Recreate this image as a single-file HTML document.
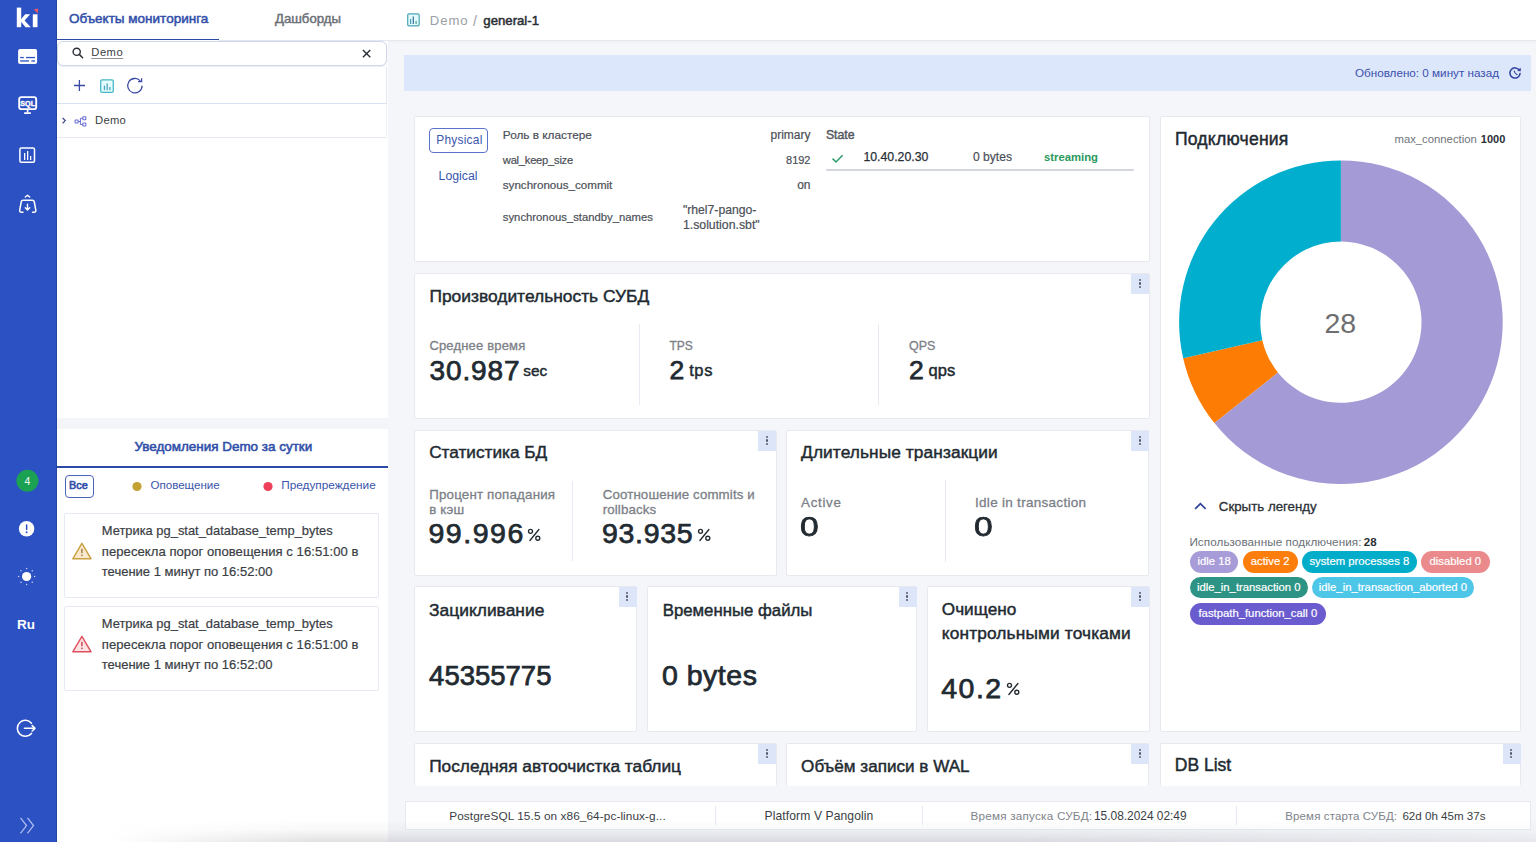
<!DOCTYPE html>
<html><head><meta charset="utf-8">
<style>
*{margin:0;padding:0;box-sizing:border-box}
html,body{width:1536px;height:842px;overflow:hidden;background:#f5f6fa;font-family:"Liberation Sans",sans-serif;color:#232a33}
.a{position:absolute}
.t,.tc{position:absolute;white-space:nowrap;line-height:1}
.card{position:absolute;background:#fff;border:1px solid #e7e9ef;border-radius:2px}
</style></head><body>
<div class="a" style="left:0px;top:0px;width:57px;height:842px;background:#2c51c3"></div>
<div class="a" style="left:56px;top:0px;width:1px;height:842px;background:#24459f"></div>
<svg class="a" style="left:0px;top:0px;" width="57" height="40" viewBox="0 0 57 40"><rect x="16.8" y="7.6" width="4.4" height="19.6" fill="#fff"/><polygon points="21,19.2 25.2,14.3 30.2,14.3 24.6,20.4 30.8,27.2 25.6,27.2 21,21.8" fill="#fff"/><rect x="32.8" y="14.3" width="4.7" height="12.9" fill="#fff"/><polygon points="33.8,9.6 38.2,8.6 37.8,13.4" fill="#e85a62"/></svg>
<svg class="a" style="left:0px;top:40px;" width="57" height="30" viewBox="0 0 57 30"><rect x="18.1" y="8.9" width="19" height="15.2" rx="2" fill="#fff"/><rect x="20.2" y="16.9" width="3.6" height="1.3" fill="#2c51c3"/><rect x="26" y="16.9" width="9" height="1.3" fill="#2c51c3"/><rect x="20.2" y="20.3" width="8.9" height="1.3" fill="#2c51c3"/><rect x="31.4" y="20.3" width="3.6" height="1.3" fill="#2c51c3"/></svg>
<svg class="a" style="left:0px;top:90px;" width="57" height="28" viewBox="0 0 57 28"><rect x="19.2" y="7.1" width="17" height="12" rx="2.2" fill="none" stroke="#fff" stroke-width="1.9"/><rect x="26.8" y="19.5" width="1.6" height="3" fill="#fff"/><rect x="24" y="22.3" width="7" height="1.6" rx=".6" fill="#fff"/><text x="27.7" y="16.3" text-anchor="middle" font-family="Liberation Sans" font-weight="700" font-size="7.2" fill="#fff" stroke="#fff" stroke-width=".35">SQL</text></svg>
<svg class="a" style="left:0px;top:140px;" width="57" height="28" viewBox="0 0 57 28"><rect x="19.9" y="7.9" width="14.6" height="14.3" rx="1.5" fill="none" stroke="#fff" stroke-width="1.5"/><rect x="24" y="13" width="1.3" height="7" fill="#fff"/><rect x="27" y="11" width="1.3" height="9" fill="#fff"/><rect x="30" y="16" width="1.3" height="4" fill="#fff"/></svg>
<svg class="a" style="left:0px;top:190px;" width="57" height="28" viewBox="0 0 57 28"><polyline points="25.3,7 27.5,5.3 29.7,7" fill="none" stroke="#fff" stroke-width="1.4" stroke-linecap="round" stroke-linejoin="round"/><path d="M23 22.3 H21.6 Q19.5 22.3 19.7 20.2 L21.2 12 Q21.5 10.3 23.2 10.3 H32.3 Q34 10.3 34.3 12 L35.8 20.2 Q36 22.3 33.9 22.3 H32.6" fill="none" stroke="#fff" stroke-width="1.5" stroke-linejoin="round" stroke-linecap="round"/><path d="M27.5 14.3 V20 M25.3 17.8 L27.5 20 L29.7 17.8" fill="none" stroke="#fff" stroke-width="1.4" stroke-linecap="round" stroke-linejoin="round"/></svg>
<svg class="a" style="left:0px;top:468px;" width="57" height="26" viewBox="0 0 57 26"><circle cx="27.4" cy="12.7" r="11" fill="#1aa152"/><text x="27.4" y="16.6" text-anchor="middle" font-family="Liberation Sans" font-size="10.5" fill="#fff">4</text></svg>
<svg class="a" style="left:0px;top:518px;" width="57" height="22" viewBox="0 0 57 22"><circle cx="26.6" cy="10.8" r="7.7" fill="#fff"/><rect x="25.9" y="6.3" width="1.5" height="5.8" rx=".7" fill="#2c51c3"/><circle cx="26.65" cy="14.2" r=".95" fill="#2c51c3"/></svg>
<svg class="a" style="left:0px;top:560px;" width="57" height="34" viewBox="0 0 57 34"><circle cx="26.6" cy="16.5" r="4.6" fill="#fff"/><circle cx="34.60" cy="16.50" r=".75" fill="#c8d3f5"/><circle cx="32.26" cy="22.16" r=".75" fill="#c8d3f5"/><circle cx="26.60" cy="24.50" r=".75" fill="#c8d3f5"/><circle cx="20.94" cy="22.16" r=".75" fill="#c8d3f5"/><circle cx="18.60" cy="16.50" r=".75" fill="#c8d3f5"/><circle cx="20.94" cy="10.84" r=".75" fill="#c8d3f5"/><circle cx="26.60" cy="8.50" r=".75" fill="#c8d3f5"/><circle cx="32.26" cy="10.84" r=".75" fill="#c8d3f5"/></svg>
<div class="t" style="left:17.00px;top:617.80px;font-size:13.5px;color:#fff;font-weight:700;">Ru</div>
<svg class="a" style="left:0px;top:712px;" width="57" height="32" viewBox="0 0 57 32"><path d="M31.5 11.2 A8 8 0 1 0 31.5 21.4" fill="none" stroke="#fff" stroke-width="1.6" stroke-linecap="round"/><path d="M24.5 16.3 H35 M32.2 13.6 L35 16.3 L32.2 19" fill="none" stroke="#fff" stroke-width="1.6" stroke-linecap="round" stroke-linejoin="round"/></svg>
<svg class="a" style="left:0px;top:810px;" width="57" height="30" viewBox="0 0 57 30"><polyline points="20.5,7.8 26.5,15.6 20.5,23.4" fill="none" stroke="#aebcf0" stroke-width="1.3"/><polyline points="27.5,7.8 33.5,15.6 27.5,23.4" fill="none" stroke="#aebcf0" stroke-width="1.3"/></svg>
<div class="a" style="left:57px;top:0px;width:331px;height:418px;background:#fff"></div>
<div class="a" style="left:57px;top:418px;width:331px;height:11px;background:#f4f5f8"></div>
<div class="a" style="left:57px;top:429px;width:331px;height:413px;background:#fff"></div>
<div class="t" style="left:68.90px;top:12.31px;font-size:13.5px;color:#2f4ea9;-webkit-text-stroke:0.5px #2f4ea9;">Объекты мониторинга</div>
<div class="t" style="left:275.00px;top:12.32px;font-size:13.2px;color:#6b6f76;-webkit-text-stroke:0.45px #6b6f76;">Дашборды</div>
<div class="a" style="left:57px;top:38.8px;width:162px;height:1.7px;background:#2b4aa6"></div>
<div class="a" style="left:219px;top:40px;width:169px;height:1px;background:#e3e8f4"></div>
<div class="a" style="left:57px;top:41px;width:330px;height:25px;background:#fff;border:1px solid #cfd6ea;border-radius:6px;box-shadow:0 1px 2px rgba(60,80,160,.12)"></div>
<svg class="a" style="left:66px;top:44px;" width="24" height="18" viewBox="0 0 24 18"><circle cx="10.7" cy="7.8" r="3.6" fill="none" stroke="#2a2f36" stroke-width="1.4"/><line x1="13.3" y1="10.4" x2="16.6" y2="13.7" stroke="#2a2f36" stroke-width="1.5" stroke-linecap="round"/></svg>
<div class="t" style="left:91.30px;top:47.00px;font-size:11.2px;color:#3a3e44;letter-spacing:0.5px;text-decoration:underline;text-decoration-color:#8a8d92;text-decoration-thickness:1.3px;text-underline-offset:2px;">Demo</div>
<svg class="a" style="left:358px;top:45px;" width="16" height="16" viewBox="0 0 16 16"><path d="M4.9 4.9 L12.3 12.3 M12.3 4.9 L4.9 12.3" stroke="#2a2f36" stroke-width="1.4"/></svg>
<div class="a" style="left:57px;top:67px;width:330px;height:37px;background:#fff;border-right:1px solid #e0e7f6;border-bottom:1px solid #d9e1f3;box-shadow:0 1px 1px rgba(60,80,160,.06)"></div>
<svg class="a" style="left:70px;top:76px;" width="20" height="20" viewBox="0 0 20 20"><path d="M9.4 4.1 V15 M4 9.5 H15" stroke="#3a48a6" stroke-width="1.3"/></svg>
<svg class="a" style="left:96px;top:75px;" width="22" height="22" viewBox="0 0 22 22"><rect x="4.7" y="4.8" width="12.6" height="12.6" rx="1.4" fill="#e6fbfd" stroke="#46b8c8" stroke-width="1.3"/><rect x="7.8" y="10.6" width="1.3" height="4.6" fill="#4aa6c0"/><rect x="10.5" y="8.4" width="1.3" height="6.8" fill="#4aa6c0"/><rect x="13.2" y="12" width="1.3" height="3.2" fill="#4aa6c0"/></svg>
<svg class="a" style="left:122px;top:73px;" width="26" height="26" viewBox="0 0 26 26"><path d="M18.3 7.9 A7.2 7.2 0 1 0 20.1 12.8" fill="none" stroke="#3a48a6" stroke-width="1.3"/><polyline points="19.6,5.3 19.6,8.6 16.1,8.6" fill="none" stroke="#3a48a6" stroke-width="1.3"/></svg>
<div class="a" style="left:57px;top:104px;width:330px;height:34px;background:#fff;border-right:1px solid #eef1f7;border-bottom:1px solid #e7eaf1"></div>
<svg class="a" style="left:58px;top:112px;" width="34" height="18" viewBox="0 0 34 18"><polyline points="4.6,5.8 7.2,8.6 4.6,11.4" fill="none" stroke="#33407f" stroke-width="1.2"/><rect x="17.1" y="8" width="3" height="3" rx=".5" fill="none" stroke="#6a6fd2" stroke-width="1.1"/><rect x="24.8" y="4.8" width="3" height="3" rx=".5" fill="none" stroke="#6a6fd2" stroke-width="1.1"/><rect x="24.8" y="11" width="3" height="3" rx=".5" fill="none" stroke="#6a6fd2" stroke-width="1.1"/><path d="M20.1 9.5 H22.4 M22.4 6.3 V12.5 M22.4 6.3 H24.8 M22.4 12.5 H24.8" fill="none" stroke="#6a6fd2" stroke-width="1"/></svg>
<div class="t" style="left:95.00px;top:115.00px;font-size:11.2px;color:#3a3e44;letter-spacing:0.3px;">Demo</div>
<div class="t" style="left:134.50px;top:440.31px;font-size:13.45px;color:#2f4ea9;-webkit-text-stroke:0.55px #2f4ea9;">Уведомления Demo за сутки</div>
<div class="a" style="left:57px;top:466px;width:331px;height:2px;background:#2b4aa6"></div>
<div class="a" style="left:64.5px;top:474.8px;width:29px;height:23px;background:#fff;border:1px solid #4a64b8;border-radius:4px"></div>
<div class="t" style="left:69.10px;top:480.42px;font-size:10.9px;color:#2f4ea9;-webkit-text-stroke:0.6px #2f4ea9;">Все</div>
<svg class="a" style="left:130px;top:480px;" width="14" height="14" viewBox="0 0 14 14"><circle cx="7" cy="6.5" r="4.6" fill="#c4a133"/></svg>
<div class="t" style="left:150.40px;top:479.40px;font-size:11.6px;color:#3a55ad;">Оповещение</div>
<svg class="a" style="left:261px;top:480px;" width="14" height="14" viewBox="0 0 14 14"><circle cx="7" cy="6.5" r="4.6" fill="#ee4058"/></svg>
<div class="t" style="left:281.20px;top:480.41px;font-size:11.8px;color:#3a55ad;">Предупреждение</div>
<div class="a" style="left:63.5px;top:512.9px;width:315px;height:85px;background:#fff;border:1px solid #e6eaf4;border-radius:2px"></div>
<svg class="a" style="left:66px;top:536px;" width="32" height="30" viewBox="0 0 32 30"><polygon points="15.9,7.3 6.8,22.8 25.1,22.8" fill="#fbe9cf" stroke="#c9a040" stroke-width="1.4" stroke-linejoin="round"/><rect x="15.2" y="12.8" width="1.4" height="4.4" fill="#9c7a3c"/><rect x="15.2" y="18.6" width="1.4" height="1.5" fill="#9c7a3c"/></svg>
<div class="t" style="left:101.80px;top:525.22px;font-size:12.9px;color:#3a3e44;-webkit-text-stroke:0.2px #3a3e44;">Метрика pg_stat_database_temp_bytes</div>
<div class="t" style="left:101.80px;top:544.50px;font-size:13.1px;color:#3a3e44;-webkit-text-stroke:0.2px #3a3e44;letter-spacing:0.04px;">пересекла порог оповещения с 16:51:00 в</div>
<div class="t" style="left:101.80px;top:564.81px;font-size:13.0px;color:#3a3e44;-webkit-text-stroke:0.2px #3a3e44;">течение 1 минут по 16:52:00</div>
<div class="a" style="left:63.5px;top:605.9px;width:315px;height:85px;background:#fff;border:1px solid #e6eaf4;border-radius:2px"></div>
<svg class="a" style="left:66px;top:629px;" width="32" height="30" viewBox="0 0 32 30"><polygon points="15.9,7.3 6.8,22.8 25.1,22.8" fill="#fde3e4" stroke="#e0505e" stroke-width="1.4" stroke-linejoin="round"/><rect x="15.2" y="12.8" width="1.4" height="4.4" fill="#c44050"/><rect x="15.2" y="18.6" width="1.4" height="1.5" fill="#c44050"/></svg>
<div class="t" style="left:101.80px;top:618.22px;font-size:12.9px;color:#3a3e44;-webkit-text-stroke:0.2px #3a3e44;">Метрика pg_stat_database_temp_bytes</div>
<div class="t" style="left:101.80px;top:637.50px;font-size:13.1px;color:#3a3e44;-webkit-text-stroke:0.2px #3a3e44;letter-spacing:0.04px;">пересекла порог оповещения с 16:51:00 в</div>
<div class="t" style="left:101.80px;top:657.81px;font-size:13.0px;color:#3a3e44;-webkit-text-stroke:0.2px #3a3e44;">течение 1 минут по 16:52:00</div>
<div class="a" style="left:388px;top:0px;width:1148px;height:40px;background:#fff"></div>
<div class="a" style="left:388px;top:40px;width:1148px;height:1px;background:#e6e8ee"></div>
<div class="a" style="left:388px;top:41px;width:1148px;height:3px;background:linear-gradient(#eef0f5,#f5f6fa)"></div>
<svg class="a" style="left:400px;top:8px;" width="32" height="24" viewBox="0 0 32 24"><rect x="7.7" y="5.9" width="11.5" height="12" rx="1.3" fill="#e3fafd" stroke="#4ba6b4" stroke-width="1.2"/><rect x="10" y="11" width="1.2" height="5" fill="#4a9fb8"/><rect x="12.7" y="8.5" width="1.2" height="7.5" fill="#3a6f9a"/><rect x="15.5" y="13" width="1.2" height="3" fill="#4a9f90"/></svg>
<div class="t" style="left:429.70px;top:14.00px;font-size:13.1px;color:#9a9ea5;letter-spacing:1.0px;">Demo</div>
<div class="t" style="left:472.90px;top:13.51px;font-size:14px;color:#9a9ea5;">/</div>
<div class="t" style="left:483.30px;top:14.00px;font-size:13.2px;color:#2a2f36;-webkit-text-stroke:0.5px #2a2f36;">general-1</div>
<div class="a" style="left:404px;top:55px;width:1127px;height:36px;background:#dde7fb"></div>
<div class="t" style="left:1354.90px;top:67.00px;font-size:11.7px;color:#3b4fae;">Обновлено: 0 минут назад</div>
<svg class="a" style="left:1505px;top:63px;" width="20" height="20" viewBox="0 0 20 20"><path d="M14.3 7.2 A5.1 5.1 0 1 0 15.1 10.4" fill="none" stroke="#3344a4" stroke-width="1.5" stroke-linecap="round"/><polygon points="12.2,7.9 15.9,8.3 15.6,4.4" fill="#3344a4"/><path d="M9.2 8 Q9.6 10.6 12 11.6" fill="none" stroke="#3344a4" stroke-width="1.2" stroke-linecap="round"/></svg>
<div class="card" style="left:414px;top:116px;width:735.5px;height:146px;"></div>
<div class="a" style="left:429.3px;top:128.3px;width:58.8px;height:25.2px;border:1.2px solid #5a74c9;border-radius:4px;background:#fff"></div>
<div class="t" style="left:436.20px;top:134.50px;font-size:11.9px;color:#3a55ad;letter-spacing:0.27px;">Physical</div>
<div class="t" style="left:438.60px;top:169.90px;font-size:12.3px;color:#3a55ad;">Logical</div>
<div class="t" style="left:502.80px;top:130.01px;font-size:11.8px;color:#4b5057;-webkit-text-stroke:0.2px #4b5057;">Роль в кластере</div>
<div class="t" style="right:725.50px;top:129.01px;font-size:12.0px;color:#4b5057;-webkit-text-stroke:0.2px #4b5057;">primary</div>
<div class="t" style="left:502.80px;top:154.50px;font-size:11.2px;color:#4b5057;-webkit-text-stroke:0.2px #4b5057;letter-spacing:-0.25px;">wal_keep_size</div>
<div class="t" style="right:725.50px;top:154.50px;font-size:11.0px;color:#4b5057;-webkit-text-stroke:0.2px #4b5057;">8192</div>
<div class="t" style="left:502.80px;top:178.60px;font-size:11.6px;color:#4b5057;-webkit-text-stroke:0.2px #4b5057;">synchronous_commit</div>
<div class="t" style="right:725.50px;top:178.91px;font-size:12.0px;color:#4b5057;-webkit-text-stroke:0.2px #4b5057;">on</div>
<div class="t" style="left:502.80px;top:212.21px;font-size:11.3px;color:#4b5057;-webkit-text-stroke:0.2px #4b5057;">synchronous_standby_names</div>
<div class="t" style="left:682.90px;top:204.11px;font-size:12.2px;color:#4b5057;-webkit-text-stroke:0.2px #4b5057;">&quot;rhel7-pango-</div>
<div class="t" style="left:682.90px;top:219.01px;font-size:12.3px;color:#4b5057;-webkit-text-stroke:0.2px #4b5057;">1.solution.sbt&quot;</div>
<div class="t" style="left:825.90px;top:128.51px;font-size:12.3px;color:#55595f;-webkit-text-stroke:0.45px #55595f;">State</div>
<div class="a" style="left:826px;top:168.5px;width:308px;height:2px;background:#d3d6dc;border-radius:2px"></div>
<svg class="a" style="left:828px;top:150px;" width="20" height="16" viewBox="0 0 20 16"><polyline points="4.6,8.6 8,12 14.6,5.2" fill="none" stroke="#2a9d6b" stroke-width="1.5"/></svg>
<div class="t" style="left:863.40px;top:151.21px;font-size:12.3px;color:#2a2f36;-webkit-text-stroke:0.25px #2a2f36;">10.40.20.30</div>
<div class="t" style="left:973.00px;top:151.20px;font-size:12.1px;color:#4b5057;-webkit-text-stroke:0.2px #4b5057;">0 bytes</div>
<div class="t" style="left:1044.00px;top:152.21px;font-size:11.3px;color:#2a9a5c;font-weight:700;">streaming</div>
<div class="card" style="left:1160px;top:116px;width:361px;height:616px;"></div>
<div class="t" style="left:1174.90px;top:130.60px;font-size:17.6px;color:#222a31;-webkit-text-stroke:0.45px #222a31;letter-spacing:0.22px;">Подключения</div>
<div class="t" style="left:1394.50px;top:134.41px;font-size:11.3px;color:#6f747b;">max_connection</div>
<div class="t" style="left:1480.80px;top:134.41px;font-size:11.0px;color:#2a2f36;font-weight:700;">1000</div>
<svg class="a" style="left:0;top:0" width="1536" height="842"><path d="M1340.90 160.40 A161.8 161.8 0 1 1 1214.40 423.08 L1277.88 372.45 A80.6 80.6 0 1 0 1340.90 241.60 Z" fill="#a49ad6"/><path d="M1214.40 423.08 A161.8 161.8 0 0 1 1183.16 358.20 L1262.32 340.14 A80.6 80.6 0 0 0 1277.88 372.45 Z" fill="#fd7c03"/><path d="M1183.16 358.20 A161.8 161.8 0 0 1 1340.90 160.40 L1340.90 241.60 A80.6 80.6 0 0 0 1262.32 340.14 Z" fill="#01aecd"/></svg>
<div class="t" style="left:1040.30px;width:600px;text-align:center;top:309.00px;font-size:28.5px;color:#6e6e70;">28</div>
<svg class="a" style="left:1188px;top:496px;" width="24" height="20" viewBox="0 0 24 20"><polyline points="7.2,12.8 12.4,7.6 17.6,12.8" fill="none" stroke="#2f3f9a" stroke-width="1.7"/></svg>
<div class="t" style="left:1218.80px;top:500.01px;font-size:13.3px;color:#2a2f36;-webkit-text-stroke:0.3px #2a2f36;">Скрыть легенду</div>
<div class="t" style="left:1189.40px;top:536.22px;font-size:11.7px;color:#6b7077;letter-spacing:0.07px;">Использованные подключения:</div>
<div class="t" style="left:1363.80px;top:537.20px;font-size:11.5px;color:#2a2f36;font-weight:700;">28</div>
<div class="a" style="left:1190px;top:551px;width:48.3px;height:21.8px;background:#a89cd8;border-radius:11px"></div>
<div class="tc" style="left:1190px;top:551px;width:48.3px;height:21.8px;line-height:21.8px;text-align:center;font-size:11.3px;color:#fff;-webkit-text-stroke:.2px #fff">idle 18</div>
<div class="a" style="left:1242.6px;top:551px;width:55.2px;height:21.8px;background:#fd7e0c;border-radius:11px"></div>
<div class="tc" style="left:1242.6px;top:551px;width:55.2px;height:21.8px;line-height:21.8px;text-align:center;font-size:11.3px;color:#fff;-webkit-text-stroke:.2px #fff">active 2</div>
<div class="a" style="left:1302px;top:551px;width:114.6px;height:21.8px;background:#02adc9;border-radius:11px"></div>
<div class="tc" style="left:1302px;top:551px;width:114.6px;height:21.8px;line-height:21.8px;text-align:center;font-size:11.3px;color:#fff;-webkit-text-stroke:.2px #fff">system processes 8</div>
<div class="a" style="left:1421px;top:551px;width:68.7px;height:21.8px;background:#ea8a8c;border-radius:11px"></div>
<div class="tc" style="left:1421px;top:551px;width:68.7px;height:21.8px;line-height:21.8px;text-align:center;font-size:11.3px;color:#fff;-webkit-text-stroke:.2px #fff">disabled 0</div>
<div class="a" style="left:1190px;top:576.7px;width:117.5px;height:21.8px;background:#2d9384;border-radius:11px"></div>
<div class="tc" style="left:1190px;top:576.7px;width:117.5px;height:21.8px;line-height:21.8px;text-align:center;font-size:11.3px;color:#fff;-webkit-text-stroke:.2px #fff">idle_in_transaction 0</div>
<div class="a" style="left:1311.8px;top:576.7px;width:162.2px;height:21.8px;background:#4ec6e8;border-radius:11px"></div>
<div class="tc" style="left:1311.8px;top:576.7px;width:162.2px;height:21.8px;line-height:21.8px;text-align:center;font-size:11.3px;color:#fff;-webkit-text-stroke:.2px #fff">idle_in_transaction_aborted 0</div>
<div class="a" style="left:1190px;top:602.9px;width:135.7px;height:21.8px;background:#6a5ccf;border-radius:11px"></div>
<div class="tc" style="left:1190px;top:602.9px;width:135.7px;height:21.8px;line-height:21.8px;text-align:center;font-size:11.3px;color:#fff;-webkit-text-stroke:.2px #fff">fastpath_function_call 0</div>
<div class="card" style="left:414px;top:273px;width:735.5px;height:146px;"></div>
<div class="a" style="left:1131.0px;top:273.5px;width:18px;height:20px;background:#dde5f9"></div>
<div class="a" style="left:1138.7px;top:279.1px;width:2.2px;height:2.2px;background:#555b68;border-radius:50%"></div>
<div class="a" style="left:1138.7px;top:282.45000000000005px;width:2.2px;height:2.2px;background:#555b68;border-radius:50%"></div>
<div class="a" style="left:1138.7px;top:285.8px;width:2.2px;height:2.2px;background:#555b68;border-radius:50%"></div>
<div class="t" style="left:429.40px;top:288.00px;font-size:17.4px;color:#222a31;-webkit-text-stroke:0.45px #222a31;">Производительность СУБД</div>
<div class="t" style="left:429.40px;top:339.31px;font-size:13.0px;color:#7c8087;-webkit-text-stroke:0.3px #7c8087;letter-spacing:0.17px;">Среднее время</div>
<div class="t" style="left:429.60px;top:356.50px;font-size:28.0px;color:#222a31;-webkit-text-stroke:0.75px #222a31;letter-spacing:0.85px;">30.987</div>
<div class="t" style="left:523.30px;top:363.01px;font-size:15.4px;color:#222a31;-webkit-text-stroke:0.45px #222a31;">sec</div>
<div class="a" style="left:639px;top:323.6px;width:1px;height:81px;background:#e8ebf3"></div>
<div class="t" style="left:669.40px;top:340.41px;font-size:12.0px;color:#7c8087;-webkit-text-stroke:0.3px #7c8087;">TPS</div>
<div class="t" style="left:669.40px;top:357.41px;font-size:26.5px;color:#222a31;-webkit-text-stroke:0.75px #222a31;">2</div>
<div class="t" style="left:689.20px;top:362.00px;font-size:16.5px;color:#222a31;-webkit-text-stroke:0.45px #222a31;letter-spacing:0.6px;">tps</div>
<div class="a" style="left:878px;top:323.6px;width:1px;height:81px;background:#e8ebf3"></div>
<div class="t" style="left:909.00px;top:340.41px;font-size:12.5px;color:#7c8087;-webkit-text-stroke:0.3px #7c8087;">QPS</div>
<div class="t" style="left:909.00px;top:357.41px;font-size:26.5px;color:#222a31;-webkit-text-stroke:0.75px #222a31;">2</div>
<div class="t" style="left:928.60px;top:362.00px;font-size:16.5px;color:#222a31;-webkit-text-stroke:0.45px #222a31;">qps</div>
<div class="card" style="left:414px;top:430px;width:362.5px;height:146px;"></div>
<div class="a" style="left:758.0px;top:430.5px;width:18px;height:20px;background:#dde5f9"></div>
<div class="a" style="left:765.7px;top:436.1px;width:2.2px;height:2.2px;background:#555b68;border-radius:50%"></div>
<div class="a" style="left:765.7px;top:439.45000000000005px;width:2.2px;height:2.2px;background:#555b68;border-radius:50%"></div>
<div class="a" style="left:765.7px;top:442.8px;width:2.2px;height:2.2px;background:#555b68;border-radius:50%"></div>
<div class="t" style="left:429.20px;top:444.41px;font-size:17.2px;color:#222a31;-webkit-text-stroke:0.45px #222a31;">Статистика БД</div>
<div class="t" style="left:429.20px;top:488.40px;font-size:13.3px;color:#7c8087;-webkit-text-stroke:0.3px #7c8087;letter-spacing:0.2px;">Процент попадания</div>
<div class="t" style="left:429.20px;top:503.01px;font-size:13.3px;color:#7c8087;-webkit-text-stroke:0.3px #7c8087;letter-spacing:0.2px;">в кэш</div>
<div class="t" style="left:428.40px;top:519.32px;font-size:28.5px;color:#222a31;-webkit-text-stroke:0.75px #222a31;letter-spacing:1.55px;">99.996</div>
<svg class="a" style="left:527.3px;top:527.5px;" width="15" height="15" viewBox="0 0 15 15"><circle cx="3.5" cy="3.3" r="2.0" fill="none" stroke="#222a31" stroke-width="1.35"/><circle cx="10.8" cy="10.2" r="2.0" fill="none" stroke="#222a31" stroke-width="1.35"/><line x1="11.9" y1="1.5" x2="2.9" y2="12.5" stroke="#222a31" stroke-width="1.35" stroke-linecap="round"/></svg>
<div class="a" style="left:572px;top:480.7px;width:1px;height:80px;background:#e8ebf3"></div>
<div class="t" style="left:602.70px;top:488.40px;font-size:13.3px;color:#7c8087;-webkit-text-stroke:0.3px #7c8087;letter-spacing:0.13px;">Соотношение commits и</div>
<div class="t" style="left:602.70px;top:503.01px;font-size:13.3px;color:#7c8087;-webkit-text-stroke:0.3px #7c8087;letter-spacing:0.13px;">rollbacks</div>
<div class="t" style="left:602.00px;top:519.32px;font-size:28.5px;color:#222a31;-webkit-text-stroke:0.75px #222a31;letter-spacing:0.7px;">93.935</div>
<svg class="a" style="left:696.7px;top:527.5px;" width="15" height="15" viewBox="0 0 15 15"><circle cx="3.5" cy="3.3" r="2.0" fill="none" stroke="#222a31" stroke-width="1.35"/><circle cx="10.8" cy="10.2" r="2.0" fill="none" stroke="#222a31" stroke-width="1.35"/><line x1="11.9" y1="1.5" x2="2.9" y2="12.5" stroke="#222a31" stroke-width="1.35" stroke-linecap="round"/></svg>
<div class="card" style="left:786.3px;top:430px;width:363px;height:146px;"></div>
<div class="a" style="left:1130.8px;top:430.5px;width:18px;height:20px;background:#dde5f9"></div>
<div class="a" style="left:1138.5px;top:436.1px;width:2.2px;height:2.2px;background:#555b68;border-radius:50%"></div>
<div class="a" style="left:1138.5px;top:439.45000000000005px;width:2.2px;height:2.2px;background:#555b68;border-radius:50%"></div>
<div class="a" style="left:1138.5px;top:442.8px;width:2.2px;height:2.2px;background:#555b68;border-radius:50%"></div>
<div class="t" style="left:801.10px;top:444.41px;font-size:17.3px;color:#222a31;-webkit-text-stroke:0.45px #222a31;letter-spacing:0.1px;">Длительные транзакции</div>
<div class="t" style="left:801.10px;top:495.51px;font-size:13.3px;color:#7c8087;-webkit-text-stroke:0.3px #7c8087;letter-spacing:0.7px;">Active</div>
<div class="t" style="left:799.60px;top:512.80px;font-size:27.5px;color:#222a31;-webkit-text-stroke:0.75px #222a31;transform:scaleX(1.22);transform-origin:0 0;">0</div>
<div class="a" style="left:944.5px;top:479.5px;width:1px;height:82px;background:#e8ebf3"></div>
<div class="t" style="left:975.00px;top:495.51px;font-size:13.5px;color:#7c8087;-webkit-text-stroke:0.3px #7c8087;letter-spacing:0.29px;">Idle in transaction</div>
<div class="t" style="left:973.50px;top:512.80px;font-size:27.5px;color:#222a31;-webkit-text-stroke:0.75px #222a31;transform:scaleX(1.22);transform-origin:0 0;">0</div>
<div class="card" style="left:414px;top:586px;width:223px;height:146px;"></div>
<div class="a" style="left:618.5px;top:586.5px;width:18px;height:20px;background:#dde5f9"></div>
<div class="a" style="left:626.2px;top:592.1px;width:2.2px;height:2.2px;background:#555b68;border-radius:50%"></div>
<div class="a" style="left:626.2px;top:595.45px;width:2.2px;height:2.2px;background:#555b68;border-radius:50%"></div>
<div class="a" style="left:626.2px;top:598.8000000000001px;width:2.2px;height:2.2px;background:#555b68;border-radius:50%"></div>
<div class="t" style="left:429.10px;top:601.50px;font-size:17.4px;color:#222a31;-webkit-text-stroke:0.45px #222a31;">Зацикливание</div>
<div class="t" style="left:429.10px;top:661.80px;font-size:27.5px;color:#222a31;-webkit-text-stroke:0.75px #222a31;">45355775</div>
<div class="card" style="left:647px;top:586px;width:270px;height:146px;"></div>
<div class="a" style="left:898.5px;top:586.5px;width:18px;height:20px;background:#dde5f9"></div>
<div class="a" style="left:906.2px;top:592.1px;width:2.2px;height:2.2px;background:#555b68;border-radius:50%"></div>
<div class="a" style="left:906.2px;top:595.45px;width:2.2px;height:2.2px;background:#555b68;border-radius:50%"></div>
<div class="a" style="left:906.2px;top:598.8000000000001px;width:2.2px;height:2.2px;background:#555b68;border-radius:50%"></div>
<div class="t" style="left:662.70px;top:602.51px;font-size:16.8px;color:#222a31;-webkit-text-stroke:0.45px #222a31;">Временные файлы</div>
<div class="t" style="left:662.00px;top:661.41px;font-size:28.5px;color:#222a31;-webkit-text-stroke:0.75px #222a31;letter-spacing:0.5px;">0 bytes</div>
<div class="card" style="left:926.5px;top:586px;width:223px;height:146px;"></div>
<div class="a" style="left:1131.0px;top:586.5px;width:18px;height:20px;background:#dde5f9"></div>
<div class="a" style="left:1138.7px;top:592.1px;width:2.2px;height:2.2px;background:#555b68;border-radius:50%"></div>
<div class="a" style="left:1138.7px;top:595.45px;width:2.2px;height:2.2px;background:#555b68;border-radius:50%"></div>
<div class="a" style="left:1138.7px;top:598.8000000000001px;width:2.2px;height:2.2px;background:#555b68;border-radius:50%"></div>
<div class="t" style="left:941.80px;top:601.00px;font-size:17.2px;color:#222a31;-webkit-text-stroke:0.45px #222a31;">Очищено</div>
<div class="t" style="left:941.80px;top:625.00px;font-size:17.3px;color:#222a31;-webkit-text-stroke:0.45px #222a31;letter-spacing:0.15px;">контрольными точками</div>
<div class="t" style="left:941.20px;top:673.82px;font-size:28.5px;color:#222a31;-webkit-text-stroke:0.75px #222a31;letter-spacing:1.5px;">40.2</div>
<svg class="a" style="left:1006px;top:681.6px;" width="15" height="15" viewBox="0 0 15 15"><circle cx="3.5" cy="3.3" r="2.0" fill="none" stroke="#222a31" stroke-width="1.35"/><circle cx="10.8" cy="10.2" r="2.0" fill="none" stroke="#222a31" stroke-width="1.35"/><line x1="11.9" y1="1.5" x2="2.9" y2="12.5" stroke="#222a31" stroke-width="1.35" stroke-linecap="round"/></svg>
<div class="card" style="left:414px;top:743px;width:362.5px;height:43px;border-bottom:none"></div>
<div class="a" style="left:758.0px;top:743.5px;width:18px;height:20px;background:#dde5f9"></div>
<div class="a" style="left:765.7px;top:749.1px;width:2.2px;height:2.2px;background:#555b68;border-radius:50%"></div>
<div class="a" style="left:765.7px;top:752.45px;width:2.2px;height:2.2px;background:#555b68;border-radius:50%"></div>
<div class="a" style="left:765.7px;top:755.8000000000001px;width:2.2px;height:2.2px;background:#555b68;border-radius:50%"></div>
<div class="t" style="left:429.20px;top:757.50px;font-size:17.3px;color:#222a31;-webkit-text-stroke:0.45px #222a31;">Последняя автоочистка таблиц</div>
<div class="card" style="left:786.3px;top:743px;width:363px;height:43px;border-bottom:none"></div>
<div class="a" style="left:1130.8px;top:743.5px;width:18px;height:20px;background:#dde5f9"></div>
<div class="a" style="left:1138.5px;top:749.1px;width:2.2px;height:2.2px;background:#555b68;border-radius:50%"></div>
<div class="a" style="left:1138.5px;top:752.45px;width:2.2px;height:2.2px;background:#555b68;border-radius:50%"></div>
<div class="a" style="left:1138.5px;top:755.8000000000001px;width:2.2px;height:2.2px;background:#555b68;border-radius:50%"></div>
<div class="t" style="left:801.10px;top:757.51px;font-size:17.1px;color:#222a31;-webkit-text-stroke:0.45px #222a31;">Объём записи в WAL</div>
<div class="card" style="left:1160px;top:743px;width:361px;height:43px;border-bottom:none"></div>
<div class="a" style="left:1502.5px;top:743.5px;width:18px;height:20px;background:#dde5f9"></div>
<div class="a" style="left:1510.2px;top:749.1px;width:2.2px;height:2.2px;background:#555b68;border-radius:50%"></div>
<div class="a" style="left:1510.2px;top:752.45px;width:2.2px;height:2.2px;background:#555b68;border-radius:50%"></div>
<div class="a" style="left:1510.2px;top:755.8000000000001px;width:2.2px;height:2.2px;background:#555b68;border-radius:50%"></div>
<div class="t" style="left:1174.80px;top:757.41px;font-size:17.5px;color:#222a31;-webkit-text-stroke:0.45px #222a31;">DB List</div>
<div class="a" style="left:405px;top:801px;width:1126px;height:29px;background:#fff;border:1px solid #e6e9f2"></div>
<div class="t" style="left:449.20px;top:810.60px;font-size:11.8px;color:#3a3e44;letter-spacing:0.085px;">PostgreSQL 15.5 on x86_64-pc-linux-g...</div>
<div class="a" style="left:715px;top:806px;width:1px;height:19px;background:#e6e9f1"></div>
<div class="t" style="left:764.60px;top:809.60px;font-size:12.1px;color:#3a3e44;letter-spacing:0.1px;">Platform V Pangolin</div>
<div class="a" style="left:921.5px;top:806px;width:1px;height:19px;background:#e6e9f1"></div>
<div class="t" style="left:970.40px;top:809.61px;font-size:11.7px;color:#80848b;letter-spacing:0.23px;">Время запуска СУБД:</div>
<div class="t" style="left:1094.00px;top:810.61px;font-size:11.9px;color:#3a3e44;">15.08.2024 02:49</div>
<div class="a" style="left:1236px;top:806px;width:1px;height:19px;background:#e6e9f1"></div>
<div class="t" style="left:1285.30px;top:810.61px;font-size:11.5px;color:#80848b;letter-spacing:0.12px;">Время старта СУБД:</div>
<div class="t" style="left:1402.40px;top:809.60px;font-size:11.6px;color:#3a3e44;">62d 0h 45m 37s</div>
<div class="a" style="left:110px;top:820px;width:1426px;height:22px;background:linear-gradient(to bottom,rgba(120,120,130,0),rgba(120,120,130,.05) 45%,rgba(120,120,130,.22));-webkit-mask-image:linear-gradient(to right,transparent,#000 200px,#000 900px,rgba(0,0,0,.5))"></div>
</body></html>
